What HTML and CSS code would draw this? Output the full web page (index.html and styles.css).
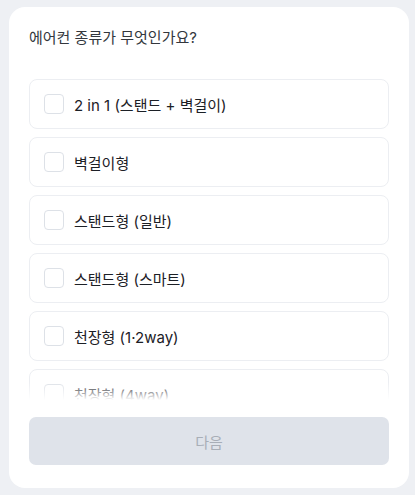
FILE: index.html
```html
<!DOCTYPE html>
<html lang="ko">
<head>
    <meta charset="UTF-8">
    <meta name="viewport" content="width=device-width, initial-scale=1.0">
    <title>에어컨 종류</title>
    <link rel="stylesheet" href="styles.css">
</head>
<body>
    <div class="card">
        <h1 class="question">에어컨 종류가 무엇인가요?</h1>

        <!-- 선택지 목록 -->
        <div class="options-wrap">
            <div class="options">
                <label class="option"><span class="check"></span><span>2 in 1 (스탠드 + 벽걸이)</span></label>
                <label class="option"><span class="check"></span><span>벽걸이형</span></label>
                <label class="option"><span class="check"></span><span>스탠드형 (일반)</span></label>
                <label class="option"><span class="check"></span><span>스탠드형 (스마트)</span></label>
                <label class="option"><span class="check"></span><span>천장형 (1·2way)</span></label>
                <label class="option"><span class="check"></span><span>천장형 (4way)</span></label>
                <label class="option"><span class="check"></span><span>기타</span></label>
            </div>
        </div>

        <button class="next-btn" disabled>다음</button>
    </div>
</body>
</html>
```

FILE: styles.css
```css
body {
    margin: 0;
    background: #eef0f4;
    font-family: Inter, 'Noto Sans CJK KR', sans-serif;
}

.card {
    background: white;
    width: 400px;
    height: 481px;
    margin: 7px 0 0 9px;
    padding: 20px 20px 0;
    border-radius: 16px;
    box-sizing: border-box;
    display: flex;
    flex-direction: column;
}

.question {
    margin: 0;
    font-size: 15px;
    font-weight: 400;
    line-height: 22px;
    color: #33373d;
}

.options-wrap {
    position: relative;
    margin-top: 30px;
}

.options {
    height: 321px;
    overflow-y: auto;
    scrollbar-width: none;
    display: flex;
    flex-direction: column;
    gap: 8px;
}

.options-wrap::after {
    content: "";
    position: absolute;
    left: 0;
    right: 0;
    bottom: 0;
    height: 18px;
    background: linear-gradient(rgba(255,255,255,0), #fff);
    pointer-events: none;
}

.option {
    flex: 0 0 auto;
    display: flex;
    align-items: center;
    height: 50px;
    padding: 0 14px;
    border: 1px solid #eceef2;
    border-radius: 8px;
    box-sizing: border-box;
    font-size: 15px;
    font-weight: 400;
    color: #1c2026;
    cursor: pointer;
}

.check {
    width: 20px;
    height: 20px;
    border: 1.5px solid #dde1e7;
    border-radius: 4px;
    box-sizing: border-box;
    margin-right: 10px;
    flex-shrink: 0;
}

.next-btn {
    margin-top: 17px;
    height: 48px;
    width: 100%;
    border: none;
    border-radius: 7px;
    background: #dfe3ea;
    color: #a8aeb7;
    font-family: inherit;
    font-size: 15px;
    font-weight: 400;
}
```
